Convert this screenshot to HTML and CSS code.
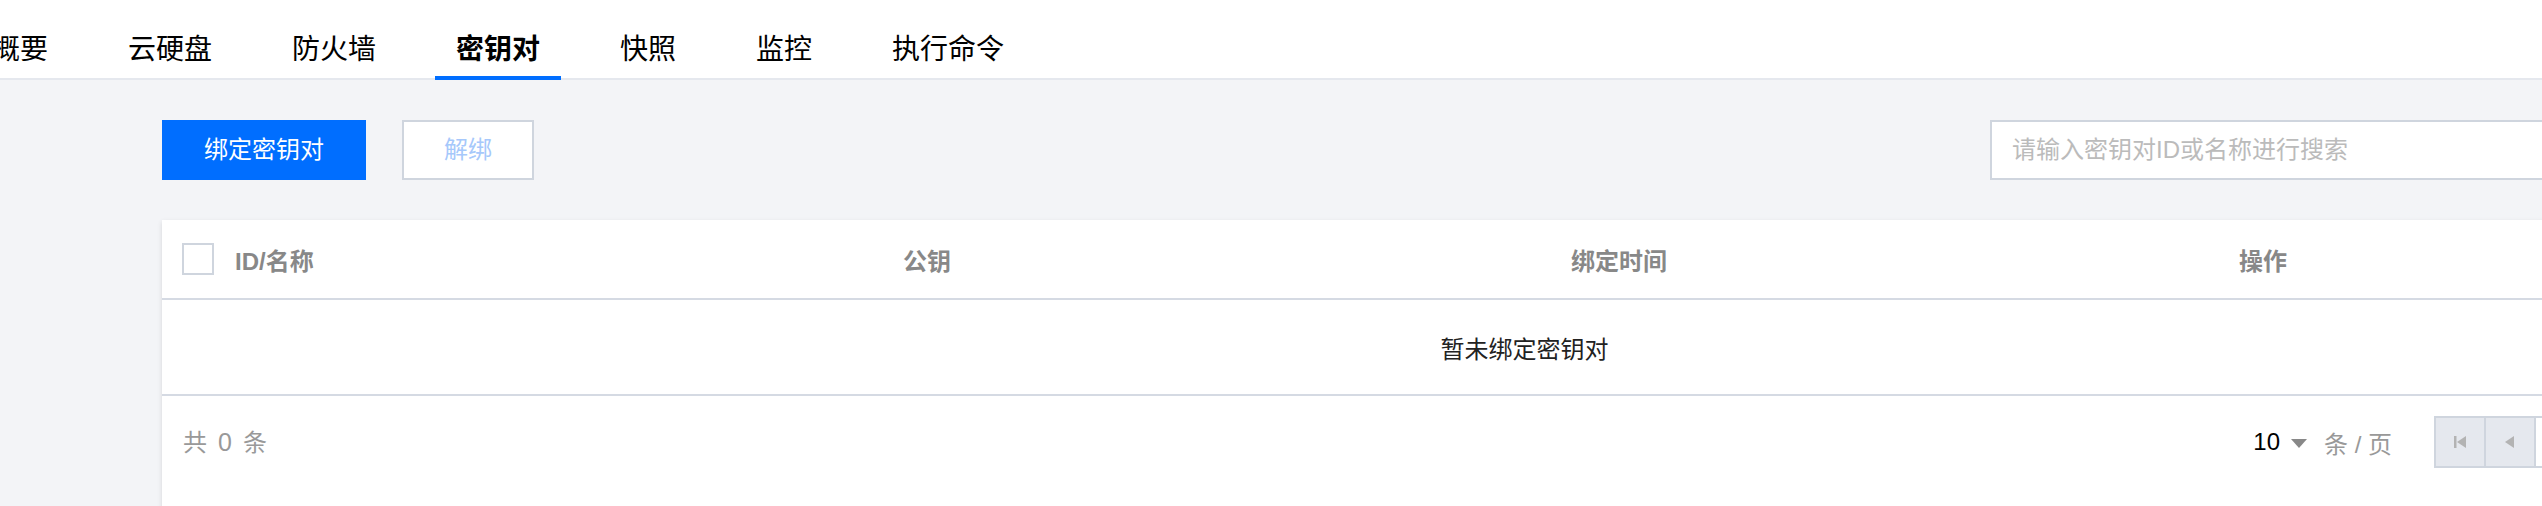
FILE: index.html
```html
<!DOCTYPE html>
<html lang="zh-CN">
<head>
<meta charset="utf-8">
<title>密钥对</title>
<link rel="stylesheet" href="styles.css">
</head>
<body>
<nav class="tabbar">
  <ul class="tabs">
    <li class="tab">概要</li>
    <li class="tab">云硬盘</li>
    <li class="tab">防火墙</li>
    <li class="tab is-active">密钥对</li>
    <li class="tab">快照</li>
    <li class="tab">监控</li>
    <li class="tab">执行命令</li>
  </ul>
</nav>
<main class="content">
  <div class="toolbar">
    <div class="actions">
      <button class="btn btn-primary">绑定密钥对</button>
      <button class="btn btn-disabled">解绑</button>
    </div>
    <div class="search">
      <input class="search-input" type="text" placeholder="请输入密钥对ID或名称进行搜索">
    </div>
  </div>
  <section class="card">
    <table class="table">
      <colgroup>
        <col class="col-check">
        <col class="col-main">
        <col class="col-main">
        <col class="col-main">
        <col class="col-main">
      </colgroup>
      <thead>
        <tr>
          <th class="cell-check"><span class="checkbox"></span></th>
          <th>ID/名称</th>
          <th>公钥</th>
          <th>绑定时间</th>
          <th>操作</th>
        </tr>
      </thead>
      <tbody>
        <tr>
          <td class="empty" colspan="5">暂未绑定密钥对</td>
        </tr>
      </tbody>
    </table>
    <div class="footer">
      <div class="total"><span>共</span><span class="total-num">0</span><span>条</span></div>
      <div class="pager">
        <div class="page-size">
          <span class="size-num">10</span>
          <svg class="caret" width="16" height="9" viewBox="0 0 16 9"><path d="M0 0H16L8 9Z" fill="#888"/></svg>
          <span class="size-unit">条 / 页</span>
        </div>
        <div class="pages">
          <span class="page-btn">
            <svg width="16" height="16" viewBox="0 0 16 16"><rect x="2" y="2" width="2.5" height="12" fill="#b3b3b3"/><path d="M14 2V14L5 8Z" fill="#b3b3b3"/></svg>
          </span>
          <span class="page-btn">
            <svg width="16" height="16" viewBox="0 0 16 16"><path d="M12 2V14L3 8Z" fill="#b3b3b3"/></svg>
          </span>
          <span class="page-input">1</span>
          <span class="page-count">/ 1 页</span>
          <span class="page-btn">
            <svg width="16" height="16" viewBox="0 0 16 16"><path d="M4 2V14L13 8Z" fill="#b3b3b3"/></svg>
          </span>
          <span class="page-btn">
            <svg width="16" height="16" viewBox="0 0 16 16"><path d="M2 2V14L11 8Z" fill="#b3b3b3"/><rect x="11.5" y="2" width="2.5" height="12" fill="#b3b3b3"/></svg>
          </span>
        </div>
      </div>
    </div>
  </section>
</main>
</body>
</html>
```

FILE: styles.css
```css
html, body {
  margin: 0;
  padding: 0;
  overflow: hidden;
}

body {
  background: #f3f4f7;
  font-family: "Liberation Sans", "Noto Sans CJK SC", sans-serif;
  color: #000;
}

/* ---------- tabs ---------- */
.tabbar {
  height: 80px;
  background: #fff;
  box-shadow: inset 0 -2px 0 #e5e8ee;
}

.tabs {
  list-style: none;
  margin: 0 0 0 -29px;
  padding: 0;
  display: flex;
  gap: 38px;
}

.tab {
  box-sizing: border-box;
  height: 80px;
  padding: 30px 21px 6px;
  border-bottom: 4px solid transparent;
  font-size: 28px;
  line-height: 40px;
  color: #000;
  white-space: nowrap;
}

.tab.is-active {
  font-weight: bold;
  border-bottom-color: #006eff;
}

/* ---------- content ---------- */
.content {
  width: 2724px;
  margin-left: 162px;
}

.toolbar {
  margin-top: 40px;
  height: 60px;
  display: flex;
  justify-content: space-between;
}

.actions {
  display: flex;
  gap: 36px;
}

.btn {
  box-sizing: border-box;
  height: 60px;
  padding: 0 40px;
  border: 2px solid #cfd5de;
  background: #fff;
  font-family: inherit;
  font-size: 24px;
  line-height: 56px;
  cursor: pointer;
}

.btn-primary {
  background: #006eff;
  border-color: #006eff;
  color: #fff;
}

.btn-disabled {
  color: #a6c8fb;
}

.search-input {
  box-sizing: border-box;
  width: 896px;
  height: 60px;
  padding: 0 20px;
  border: 2px solid #cfd5de;
  background: #fff;
  font-family: inherit;
  font-size: 24px;
  outline: none;
}

.search-input::placeholder {
  color: #bbb;
}

/* ---------- card / table ---------- */
.card {
  margin-top: 40px;
  background: #fff;
  box-shadow: 0 2px 5px rgba(0, 0, 0, 0.12);
  height: 300px;
}

.table {
  width: 100%;
  table-layout: fixed;
  border-collapse: collapse;
}

.col-check {
  width: 53px;
}

.col-main {
  width: 668px;
}

.table th {
  height: 78px;
  padding: 0 0 0 20px;
  text-align: left;
  font-size: 24px;
  font-weight: bold;
  color: #888;
  border-bottom: 2px solid #d5dae3;
  white-space: nowrap;
}

.checkbox {
  display: block;
  box-sizing: border-box;
  width: 32px;
  height: 32px;
  border: 2px solid #cfd5de;
  background: #fff;
}

.table td.empty {
  height: 94px;
  padding: 0;
  text-align: center;
  font-size: 24px;
  color: #222;
  border-bottom: 2px solid #d5dae3;
}

/* ---------- footer ---------- */
.footer {
  display: flex;
  justify-content: space-between;
  align-items: center;
  padding: 20px;
}

.total {
  display: flex;
  align-items: baseline;
  gap: 11px;
  font-size: 24px;
  line-height: 32px;
  color: #999;
  padding-left: 1px;
}

.total-num {
  font-size: 25px;
}

.pager {
  display: flex;
  align-items: center;
  gap: 42px;
}

.page-size {
  display: flex;
  align-items: center;
  font-size: 24px;
}

.size-num {
  color: #000;
}

.caret {
  margin: 2px 17px 0 11px;
}

.size-unit {
  color: #999;
}

.pages {
  display: flex;
  align-items: center;
}

.page-btn {
  box-sizing: border-box;
  width: 52px;
  height: 52px;
  margin-left: -2px;
  border: 2px solid #cfd5de;
  background: #e5e8ee;
  display: flex;
  align-items: center;
  justify-content: center;
}

.page-btn:first-child {
  margin-left: 0;
}

.page-input {
  box-sizing: border-box;
  width: 100px;
  height: 52px;
  margin-left: -2px;
  border: 2px solid #cfd5de;
  background: #fff;
  font-size: 24px;
  line-height: 48px;
  text-align: center;
}

.page-count {
  width: 132px;
  text-align: center;
  font-size: 24px;
  color: #999;
}
```
